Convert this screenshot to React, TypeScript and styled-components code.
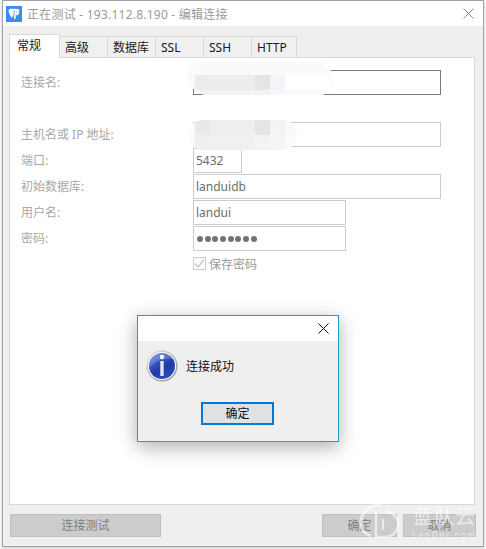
import * as React from 'react';
import styled, { createGlobalStyle } from 'styled-components';

const FONT = `"Noto Sans", "Noto Sans CJK SC", sans-serif`;

const GlobalStyle = createGlobalStyle`
  html, body {
    margin: 0;
    padding: 0;
    background: #ffffff;
  }
  body {
    width: 486px;
    height: 549px;
    overflow: hidden;
    font-family: ${FONT};
    font-size: 12px;
  }
`;

const Page = styled.div`
  position: relative;
  width: 486px;
  height: 549px;
  padding: 0 2px 2px 2px;
  box-sizing: border-box;
  overflow: hidden;
`;

const Window = styled.div`
  width: 482px;
  height: 547px;
  box-sizing: border-box;
  display: flex;
  flex-direction: column;
  border: 1px solid #a3a3a3;
  background: #efefef;
  box-shadow: 0 1px 3px rgba(0, 0, 0, 0.25);
`;

const TitleBar = styled.div`
  height: 25px;
  flex: none;
  display: flex;
  align-items: center;
  gap: 5px;
  padding: 0 9px 0 3px;
  background: #ffffff;
`;

const TitleText = styled.div`
  flex: 1;
  font-size: 12px;
  letter-spacing: 0.23px;
  color: #9a9a9a;
  white-space: nowrap;
`;

const Body = styled.div`
  flex: 1;
  display: flex;
  flex-direction: column;
  padding: 8px 8px 0 6px;
  min-height: 0;
`;

const TabStrip = styled.div`
  flex: none;
  height: 24px;
  display: flex;
  align-items: flex-end;
  margin-bottom: -1px;
  position: relative;
  z-index: 1;
`;

const Tab = styled.div<{ $active?: boolean; $width: number }>`
  box-sizing: border-box;
  width: ${(p) => p.$width}px;
  height: ${(p) => (p.$active ? 24 : 22)}px;
  padding-left: ${(p) => (p.$active ? 7 : 5)}px;
  line-height: 21px;
  background: ${(p) => (p.$active ? '#ffffff' : '#f0f0f0')};
  border: 1px solid #d9d9d9;
  border-left-width: ${(p) => (p.$active ? 1 : 0)}px;
  border-bottom: ${(p) => (p.$active ? '1px solid #ffffff' : '1px solid #d9d9d9')};
  color: #1a1a1a;
  font-size: 12px;
`;

const Panel = styled.div`
  flex: 1;
  box-sizing: border-box;
  background: #ffffff;
  border: 1px solid #d9d9d9;
  padding: 12px 0 0 11px;
  display: flex;
  flex-direction: column;
  min-height: 0;
`;

const Row = styled.div<{ $gapAfter?: number }>`
  display: flex;
  align-items: center;
  height: 25px;
  margin-bottom: ${(p) => p.$gapAfter ?? 1}px;
`;

const FieldLabel = styled.div`
  width: 172px;
  flex: none;
  margin-top: -2px;
  color: #a8a8a8;
  font-size: 12px;
`;

const Field = styled.div<{ $width: number; $focused?: boolean }>`
  box-sizing: border-box;
  width: ${(p) => p.$width}px;
  height: 25px;
  line-height: 23px;
  padding-left: 2px;
  border: 1px solid ${(p) => (p.$focused ? '#7a7a7a' : '#cccccc')};
  background: #ffffff;
  color: #6d6d6d;
  font-size: 12px;
`;

const Dots = styled.div`
  display: flex;
  align-items: center;
  gap: 1.7px;
  height: 23px;
  padding-left: 1px;
`;

const Dot = styled.span`
  width: 6px;
  height: 6px;
  border-radius: 50%;
  background: #737373;
`;

const CheckRow = styled.div`
  display: flex;
  align-items: center;
  gap: 3px;
  margin: 4px 0 0 172px;
  height: 15px;
  color: #9a9a9a;
`;

const CheckBox = styled.div`
  box-sizing: border-box;
  width: 13px;
  height: 13px;
  border: 1px solid #cccccc;
  display: flex;
  align-items: center;
  justify-content: center;
`;

const Footer = styled.div`
  flex: none;
  height: 41px;
  box-sizing: border-box;
  padding: 9px 0 0 1px;
  margin-right: -1px;
  display: flex;
  align-items: flex-start;
`;

const FooterSpacer = styled.div`
  flex: 1;
`;

const FooterButton = styled.div<{ $width: number; $left?: number }>`
  box-sizing: border-box;
  width: ${(p) => p.$width}px;
  height: 23px;
  line-height: 21px;
  margin-left: ${(p) => p.$left ?? 0}px;
  text-align: center;
  background: #cccccc;
  border: 1px solid #bfbfbf;
  color: #808080;
  font-size: 12px;
`;

/* pixelated privacy smudges pasted over the screenshot */
const Smudge = styled.div<{ $left: number; $top: number; $width: number; $height: number; $radius: string }>`
  position: absolute;
  left: ${(p) => p.$left}px;
  top: ${(p) => p.$top}px;
  width: ${(p) => p.$width}px;
  height: ${(p) => p.$height}px;
  border-radius: ${(p) => p.$radius};
  background: #fafafa;
  overflow: hidden;
  z-index: 2;
`;

const MosaicRow = styled.div<{ $top: number; $left: number }>`
  position: absolute;
  left: ${(p) => p.$left}px;
  top: ${(p) => p.$top}px;
  display: flex;
`;

const MosaicCell = styled.div<{ $shade: string }>`
  width: 15px;
  height: 15px;
  background: ${(p) => p.$shade};
`;

const ModalBox = styled.div`
  position: absolute;
  left: 137px;
  top: 315px;
  width: 202px;
  height: 127px;
  box-sizing: border-box;
  border: 1px solid #1ba1c6;
  background: #efefef;
  display: flex;
  flex-direction: column;
  box-shadow: 0 5px 18px rgba(0, 0, 0, 0.32);
  z-index: 3;
`;

const ModalTitle = styled.div`
  flex: none;
  height: 25px;
  background: #ffffff;
  display: flex;
  align-items: center;
  justify-content: flex-end;
  padding-right: 9px;
`;

const ModalContent = styled.div`
  display: flex;
  align-items: center;
  gap: 8px;
  height: 33px;
  padding: 8px 0 0 8px;
  color: #111111;
  font-size: 12px;
`;

const ModalActions = styled.div`
  display: flex;
  justify-content: center;
  margin-top: 20px;
  padding-right: 1px;
`;

const ModalButton = styled.div`
  box-sizing: border-box;
  width: 73px;
  height: 23px;
  line-height: 19px;
  text-align: center;
  background: #e1e1e1;
  border: 2px solid #0078d7;
  color: #111111;
  font-size: 12px;
`;

const Watermark = styled.div`
  position: absolute;
  left: 359px;
  top: 503px;
  display: flex;
  align-items: flex-start;
  gap: 12px;
  color: rgba(255, 255, 255, 0.62);
  z-index: 4;
`;

const WatermarkText = styled.div`
  display: flex;
  flex-direction: column;
  align-items: flex-start;
`;

const WatermarkName = styled.div`
  font-size: 20px;
  line-height: 27px;
  letter-spacing: 1px;
  margin-left: 1px;
`;

const WatermarkUrl = styled.div`
  font-size: 8px;
  line-height: 9px;
  letter-spacing: 2px;
`;

function ElephantIcon() {
  return (
    <svg width="16" height="16" viewBox="0 0 16 16">
      <rect width="16" height="16" fill="#3d8bf0" />
      <path
        d="M2.500 4.500C3 2.800 5.200 2.400 7.200 3.100 8.800 2.500 11.500 2.500 13 3.600c.7 1.200.3 3-.3 4.200-.4.900-.8 1.700-1.500 1.700-.6 0-.8-.6-.9-1.100l-.6.200v3.400c0 .9-.9 1.300-1.400.8-.4-.4-.4-1.900-.3-3.400l-1-.1c-.2 1.200-.6 2.600-1.500 2.300C4.600 10.300 3.600 8.500 3 6.800 2.700 6 2.400 5.200 2.500 4.500z"
        fill="#ffffff"
      />
      <path d="M8 4.500v5M10.800 5.300l-.5 1" stroke="#3d8bf0" strokeWidth="0.800" fill="none" />
    </svg>
  );
}

function CloseIcon({ color }: { color: string }) {
  return (
    <svg width="11" height="11" viewBox="0 0 11 11">
      <path d="M0.500 0.500L10.500 10.500M10.500 0.500L0.500 10.500" stroke={color} strokeWidth="1" fill="none" />
    </svg>
  );
}

function InfoIcon() {
  return (
    <svg width="32" height="32" viewBox="0 0 32 32">
      <defs>
        <linearGradient id="infoRim" x1="0" y1="0" x2="1" y2="1">
          <stop offset="0" stopColor="#e4e4e4" />
          <stop offset="1" stopColor="#8d8d8d" />
        </linearGradient>
        <linearGradient id="infoBall" x1="0.2" y1="0" x2="0.8" y2="1">
          <stop offset="0" stopColor="#5f7fe0" />
          <stop offset="0.55" stopColor="#1d3aa6" />
          <stop offset="1" stopColor="#2c50c4" />
        </linearGradient>
      </defs>
      <circle cx="16" cy="16" r="15.500" fill="url(#infoRim)" />
      <circle cx="16" cy="16" r="14" fill="#ffffff" />
      <circle cx="16" cy="16" r="13" fill="url(#infoBall)" />
      <path d="M3.500 18C8 12 15 8 28.500 9 24 4 19 3 16 3 9 3 3 9.500 3.500 18z" fill="#ffffff" opacity="0.18" />
      <circle cx="16" cy="7" r="2.200" fill="#ffffff" />
      <path d="M14.300 11h3.400v15h-3.400z" fill="#e6e6ea" />
    </svg>
  );
}

function WatermarkLogo() {
  return (
    <svg width="41" height="36" viewBox="0 0 41 36" fill="none" stroke="rgba(255,255,255,0.6)">
      <path d="M22 2C10 2 2 9 2 19c0 7 4 12 10 14" strokeWidth="3" />
      <path d="M17 9v25h9c8 0 13-6 13-13S34 9 26 9" strokeWidth="2.500" />
      <path d="M24 16v11" strokeWidth="2" />
    </svg>
  );
}

function Check() {
  return (
    <svg width="11" height="11" viewBox="0 0 11 11">
      <path d="M1 5.500L4 9 10 1.500" stroke="#c4c4c4" strokeWidth="1.300" fill="none" />
    </svg>
  );
}

const tabs = [
  { label: '常规', width: 51, active: true },
  { label: '高级', width: 48 },
  { label: '数据库', width: 48 },
  { label: 'SSL', width: 48 },
  { label: 'SSH', width: 48 },
  { label: 'HTTP', width: 45 },
];

const smudgeOne = [
  { left: 7, top: 13, shades: ['#ececec', '#ededed', '#ededed', '#ededed', '#e5e5e3', '#f3f4f7', '#ffffff', '#ffffff', '#ffffff'] },
  { left: 7, top: 28, shades: ['#f3f3f3', '#f3f3f3', '#f3f3f3', '#f3f3f3', '#f3f3f3', '#f7f7f7', '#f9f9f9', '#f9f9f9', '#f9f9f9'] },
];

const smudgeTwo = [
  { left: 7, top: 0, shades: ['#e9e9e9', '#efefef', '#efefef', '#efefef', '#e5e5e3', '#f3f3f3', '#f9f9f9'] },
  { left: 7, top: 15, shades: ['#efefef', '#f0f0f0', '#f0f0f0', '#f0f0f0', '#f3f3f3', '#f5f5f5', '#fbfbfb'] },
];

export default function App() {
  return (
    <Page>
      <GlobalStyle />
      <Window>
        <TitleBar>
          <ElephantIcon />
          <TitleText>正在测试 - 193.112.8.190 - 编辑连接</TitleText>
          <CloseIcon color="#8c8c8c" />
        </TitleBar>
        <Body>
          <TabStrip>
            {tabs.map((tab) => (
              <Tab key={tab.label} $active={tab.active} $width={tab.width}>
                {tab.label}
              </Tab>
            ))}
          </TabStrip>
          <Panel>
            <Row $gapAfter={27}>
              <FieldLabel>连接名:</FieldLabel>
              <Field $width={248} $focused />
            </Row>
            <Row>
              <FieldLabel>主机名或 IP 地址:</FieldLabel>
              <Field $width={248} />
            </Row>
            <Row>
              <FieldLabel>端口:</FieldLabel>
              <Field $width={49}>5432</Field>
            </Row>
            <Row>
              <FieldLabel>初始数据库:</FieldLabel>
              <Field $width={248}>landuidb</Field>
            </Row>
            <Row>
              <FieldLabel>用户名:</FieldLabel>
              <Field $width={153}>landui</Field>
            </Row>
            <Row>
              <FieldLabel>密码:</FieldLabel>
              <Field $width={153}>
                <Dots>
                  {Array.from({ length: 8 }, (_, i) => (
                    <Dot key={i} />
                  ))}
                </Dots>
              </Field>
            </Row>
            <CheckRow>
              <CheckBox>
                <Check />
              </CheckBox>
              保存密码
            </CheckRow>
          </Panel>
          <Footer>
            <FooterButton $width={151}>连接测试</FooterButton>
            <FooterSpacer />
            <FooterButton $width={75}>确定</FooterButton>
            <FooterButton $width={73} $left={6}>
              取消
            </FooterButton>
          </Footer>
        </Body>
      </Window>

      <Smudge $left={188} $top={62} $width={144} $height={33} $radius="16px 18px 14px 24px">
        {smudgeOne.map((row) => (
          <MosaicRow key={row.top} $left={row.left} $top={row.top}>
            {row.shades.map((shade, i) => (
              <MosaicCell key={i} $shade={shade} />
            ))}
          </MosaicRow>
        ))}
      </Smudge>
      <Smudge $left={188} $top={120} $width={109} $height={30} $radius="15px">
        {smudgeTwo.map((row) => (
          <MosaicRow key={row.top} $left={row.left} $top={row.top}>
            {row.shades.map((shade, i) => (
              <MosaicCell key={i} $shade={shade} />
            ))}
          </MosaicRow>
        ))}
      </Smudge>

      <ModalBox>
        <ModalTitle>
          <CloseIcon color="#111111" />
        </ModalTitle>
        <ModalContent>
          <InfoIcon />
          连接成功
        </ModalContent>
        <ModalActions>
          <ModalButton>确定</ModalButton>
        </ModalActions>
      </ModalBox>

      <Watermark>
        <WatermarkLogo />
        <WatermarkText>
          <WatermarkName>蓝队云</WatermarkName>
          <WatermarkUrl>LanDui.com</WatermarkUrl>
        </WatermarkText>
      </Watermark>
    </Page>
  );
}
